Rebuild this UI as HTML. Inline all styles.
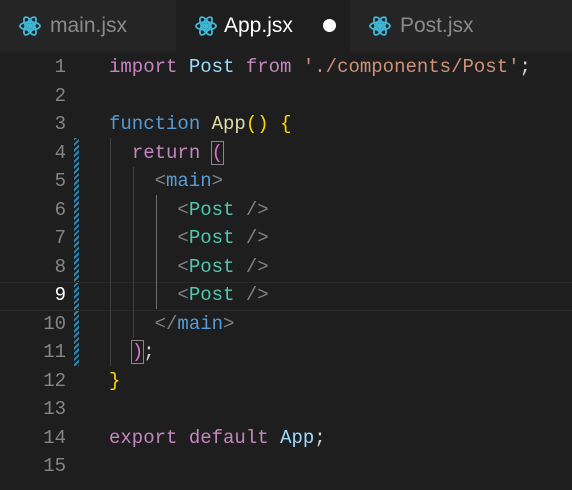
<!DOCTYPE html><html><head><style>
body{margin:0;width:572px;height:490px;background:#1e1e1e;overflow:hidden;font-family:"Liberation Mono",monospace}
.tabs{position:absolute;top:0;left:0;width:572px;height:52px;background:#252526}
.tab{position:absolute;top:0;height:52px;font-family:"Liberation Sans",sans-serif;font-size:21px;line-height:52px;color:#8b8b8b}
.tab svg{position:absolute;left:18px;top:14px}
.tab span{position:absolute;left:50px}
.ln{position:absolute;left:0;width:66px;text-align:right;color:#858585;font-size:19px;height:28.5px;line-height:28.5px}
.code{position:absolute;left:109px;font-size:19px;white-space:pre;color:#d4d4d4;height:28.5px;line-height:28.5px}
.k{color:#c586c0}.b{color:#569cd6}.f{color:#dcdcaa}.t{color:#4ec9b0}.s{color:#ce9178}.v{color:#9cdcfe}.g{color:#808080}.y{color:#ffd700}.p{color:#da70d6}
.guide{position:absolute;width:1px;background:#404040}
</style></head><body>
<div class="tabs">
<div class="tab" style="left:0;width:176px"><svg width="24" height="24" viewBox="-12 -12 24 24" fill="none" stroke="#3fb8d8" stroke-width="1.8"><circle r="2.2" fill="#3fb8d8"/><ellipse rx="10" ry="4"/><ellipse rx="10" ry="4" transform="rotate(60)"/><ellipse rx="10" ry="4" transform="rotate(120)"/></svg><span>main.jsx</span></div>
<div class="tab" style="left:176px;width:174px;background:#1e1e1e;color:#fff"><svg width="24" height="24" viewBox="-12 -12 24 24" fill="none" stroke="#3fb8d8" stroke-width="1.8"><circle r="2.2" fill="#3fb8d8"/><ellipse rx="10" ry="4"/><ellipse rx="10" ry="4" transform="rotate(60)"/><ellipse rx="10" ry="4" transform="rotate(120)"/></svg><span style="left:48px">App.jsx</span><div style="position:absolute;left:147px;top:19px;width:13px;height:13px;border-radius:50%;background:#fff"></div></div>
<div class="tab" style="left:350px;width:222px"><svg width="24" height="24" viewBox="-12 -12 24 24" fill="none" stroke="#3fb8d8" stroke-width="1.8"><circle r="2.2" fill="#3fb8d8"/><ellipse rx="10" ry="4"/><ellipse rx="10" ry="4" transform="rotate(60)"/><ellipse rx="10" ry="4" transform="rotate(120)"/></svg><span>Post.jsx</span></div>
</div>
<div style="position:absolute;left:74px;top:138px;width:5px;height:228px;background:repeating-linear-gradient(135deg,#2a8ab8 0 2px,#1e1e1e 2px 4px)"></div>
<div style="position:absolute;left:0;top:282px;width:572px;height:27px;border-top:1px solid #2a2a2a;border-bottom:1px solid #2a2a2a"></div>
<div class="guide" style="left:110px;top:138px;height:228px"></div>
<div class="guide" style="left:133px;top:167px;height:171px"></div>
<div class="guide" style="left:156px;top:195px;height:114px;background:#707070"></div>
<div style="position:absolute;left:0;top:53px">
<div class="ln" style="top:0">1</div><div class="ln" style="top:28.5px">2</div><div class="ln" style="top:57px">3</div><div class="ln" style="top:85.5px">4</div><div class="ln" style="top:114px">5</div><div class="ln" style="top:142.5px">6</div><div class="ln" style="top:171px">7</div><div class="ln" style="top:199.5px">8</div><div class="ln" style="top:228px;color:#fff">9</div><div class="ln" style="top:256.5px">10</div><div class="ln" style="top:285px">11</div><div class="ln" style="top:313.5px">12</div><div class="ln" style="top:342px">13</div><div class="ln" style="top:370.5px">14</div><div class="ln" style="top:399px">15</div>
<div class="code" style="top:0"><span class="k">import</span> <span class="v">Post</span> <span class="k">from</span> <span class="s">'./components/Post'</span>;</div>
<div class="code" style="top:57px"><span class="b">function</span> <span class="f">App</span><span class="y">()</span> <span class="y">{</span></div>
<div class="code" style="top:85.5px">  <span class="k">return</span> <span class="p" style="outline:1px solid #888">(</span></div>
<div class="code" style="top:114px">    <span class="g">&lt;</span><span class="b">main</span><span class="g">&gt;</span></div>
<div class="code" style="top:142.5px">      <span class="g">&lt;</span><span class="t">Post</span> <span class="g">/&gt;</span></div>
<div class="code" style="top:171px">      <span class="g">&lt;</span><span class="t">Post</span> <span class="g">/&gt;</span></div>
<div class="code" style="top:199.5px">      <span class="g">&lt;</span><span class="t">Post</span> <span class="g">/&gt;</span></div>
<div class="code" style="top:228px">      <span class="g">&lt;</span><span class="t">Post</span> <span class="g">/&gt;</span></div>
<div class="code" style="top:256.5px">    <span class="g">&lt;/</span><span class="b">main</span><span class="g">&gt;</span></div>
<div class="code" style="top:285px">  <span class="p" style="outline:1px solid #888">)</span>;</div>
<div class="code" style="top:313.5px"><span class="y">}</span></div>
<div class="code" style="top:370.5px"><span class="k">export</span> <span class="k">default</span> <span class="v">App</span>;</div>
</div>
</body></html>
